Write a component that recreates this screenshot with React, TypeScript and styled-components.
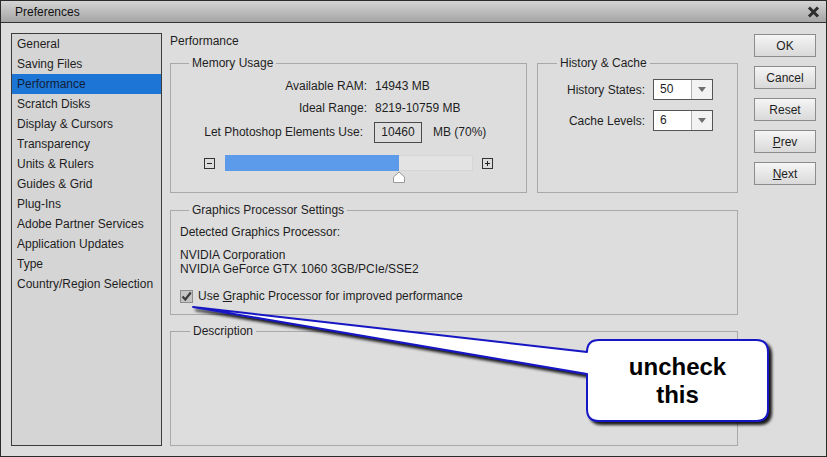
import React from 'react';
import styled, { createGlobalStyle } from 'styled-components';

const GlobalStyle = createGlobalStyle`
  html, body {
    margin: 0;
    padding: 0;
    background: #dcdcdc;
  }
  body {
    font-family: "Liberation Sans", Arial, sans-serif;
    font-size: 12px;
    color: #1e1e1e;
  }
`;

const Page = styled.div`
  position: relative;
  width: 827px;
  height: 457px;
`;

const Window = styled.div`
  width: 827px;
  height: 457px;
  box-sizing: border-box;
  border: 1px solid #2a2a2a;
  background: #dddddd;
  display: flex;
  flex-direction: column;
`;

const TitleBar = styled.div`
  height: 21px;
  flex: none;
  display: flex;
  align-items: center;
  justify-content: space-between;
  padding: 0 6px 0 14px;
  background: linear-gradient(#d4d4d4, #a5a5a5);
  border-bottom: 1px solid #333;
  color: #111;
  font-size: 12px;
`;

const Body = styled.div`
  flex: 1;
  display: flex;
  padding: 10px 10px 10px 10px;
  min-height: 0;
`;

const Sidebar = styled.ul`
  width: 151px;
  box-sizing: border-box;
  margin: 0;
  padding: 0;
  list-style: none;
  border: 1px solid #3b3b3b;
  background: #d5d5d5;
`;

const NavItem = styled.li<{ $active?: boolean }>`
  height: 20px;
  line-height: 20px;
  padding-left: 5px;
  white-space: nowrap;
  background: ${(p) => (p.$active ? '#1d76d6' : 'transparent')};
  color: ${(p) => (p.$active ? '#10203a' : '#1e1e1e')};
`;

const Content = styled.div`
  width: 568px;
  margin-left: 8px;
  display: flex;
  flex-direction: column;
`;

const Heading = styled.div`
  height: 16px;
  line-height: 16px;
`;

const TopRow = styled.div`
  margin-top: 7px;
  height: 137px;
  display: flex;
  gap: 10px;
`;

const Group = styled.fieldset<{ $width?: number; $height?: number; $gap?: number; $fill?: boolean }>`
  margin: ${(p) => p.$gap ?? 0}px 0 0 0;
  padding: 0;
  min-width: 0;
  box-sizing: border-box;
  border: 1px solid #a9a9a9;
  flex: ${(p) => (p.$fill ? '1' : 'none')};
  ${(p) => (p.$width ? `width: ${p.$width}px;` : '')}
  ${(p) => (p.$height ? `height: ${p.$height}px;` : '')}
`;

const Legend = styled.legend<{ $indent: number }>`
  margin-left: ${(p) => p.$indent}px;
  padding: 0 3px;
  line-height: 14px;
  font-size: 12px;
`;

const MemGrid = styled.div`
  display: grid;
  grid-template-columns: 167px auto;
  grid-template-rows: 18px 18px 22px;
  column-gap: 8px;
  row-gap: 4px;
  align-items: center;
  padding: 7px 0 0 29px;
`;

const Label = styled.div<{ $trim?: number }>`
  text-align: right;
  white-space: nowrap;
  margin-right: ${(p) => p.$trim ?? 0}px;
`;

const Value = styled.div`
  display: flex;
  align-items: center;
  white-space: nowrap;
`;

const NumberBox = styled.div`
  width: 48px;
  height: 21px;
  box-sizing: border-box;
  border: 1px solid #4a4a4a;
  text-align: center;
  line-height: 19px;
  margin-left: -1px;
`;

const Unit = styled.span`
  margin-left: 11px;
`;

const SliderRow = styled.div`
  margin-top: 12px;
  height: 16px;
  display: flex;
  align-items: center;
  padding-left: 33px;
`;

const StepBox = styled.div<{ $plus?: boolean }>`
  position: relative;
  width: 11px;
  height: 11px;
  box-sizing: border-box;
  border: 1px solid #333;
  &::before {
    content: '';
    position: absolute;
    left: 2px;
    top: 4px;
    width: 5px;
    height: 1px;
    background: #222;
  }
  &::after {
    content: '';
    display: ${(p) => (p.$plus ? 'block' : 'none')};
    position: absolute;
    left: 4px;
    top: 2px;
    width: 1px;
    height: 5px;
    background: #222;
  }
`;

const Track = styled.div`
  position: relative;
  width: 248px;
  height: 16px;
  margin: 0 9px 0 10px;
  background: #e3e3e3;
  box-shadow: inset 0 0 0 1px #d6d6d6;
`;

const Fill = styled.div`
  height: 100%;
  background: #5b9be9;
`;

const Thumb = styled.svg`
  position: absolute;
  top: 16px;
  margin-left: -7px;
`;

const HistGrid = styled.div`
  display: grid;
  grid-template-columns: 80px 60px;
  grid-auto-rows: 21px;
  column-gap: 8px;
  row-gap: 10px;
  align-items: center;
  padding: 9px 0 0 27px;
`;

const Select = styled.div`
  display: flex;
  height: 21px;
  box-sizing: border-box;
  border: 1px solid #555;
  background: #fff;
`;

const SelectValue = styled.div`
  flex: 1;
  padding-left: 6px;
  line-height: 19px;
`;

const SelectArrow = styled.div`
  width: 20px;
  border-left: 1px solid #b0b0b0;
  background: #f2f2f2;
  display: flex;
  align-items: center;
  justify-content: center;
  &::after {
    content: '';
    border-left: 4px solid transparent;
    border-right: 4px solid transparent;
    border-top: 5px solid #6f6f6f;
  }
`;

const GpuBody = styled.div`
  padding: 8px 0 10px 9px;
  line-height: 14px;
`;

const InfoBlock = styled.div`
  margin-top: 9px;
`;

const CheckRow = styled.label`
  margin-top: 12px;
  height: 16px;
  display: flex;
  align-items: center;
  gap: 5px;
`;

const CheckBox = styled.span`
  width: 13px;
  height: 13px;
  box-sizing: border-box;
  border: 1px solid #8d8d8d;
  background: #c4c4c4;
  display: flex;
  align-items: center;
  justify-content: center;
`;

const Buttons = styled.div`
  width: 62px;
  margin-left: 16px;
  padding-top: 1px;
  display: flex;
  flex-direction: column;
  gap: 9px;
`;

const Button = styled.button`
  height: 23px;
  padding: 0;
  border: 1px solid #8c8c8c;
  border-radius: 0;
  background: linear-gradient(#f5f5f5, #d9d9d9);
  font-family: inherit;
  font-size: 12px;
  color: #1e1e1e;
`;

const Annotation = styled.svg`
  position: absolute;
  left: 0;
  top: 0;
  pointer-events: none;
  overflow: visible;
`;

const CalloutText = styled.div`
  position: absolute;
  left: 587px;
  top: 340px;
  width: 181px;
  height: 81px;
  display: flex;
  flex-direction: column;
  align-items: center;
  justify-content: center;
  font-family: "Liberation Sans", Arial, sans-serif;
  font-weight: bold;
  font-size: 24px;
  line-height: 28px;
  color: #000;
  pointer-events: none;
`;

const sections = [
  'General',
  'Saving Files',
  'Performance',
  'Scratch Disks',
  'Display & Cursors',
  'Transparency',
  'Units & Rulers',
  'Guides & Grid',
  'Plug-Ins',
  'Adobe Partner Services',
  'Application Updates',
  'Type',
  'Country/Region Selection',
];

const memoryPercent = 70;

const App: React.FC = () => {
  return (
    <Page>
      <GlobalStyle />
      <Window>
        <TitleBar>
          <span>Preferences</span>
          <svg width="13" height="12" viewBox="0 0 13 12">
            <path d="M2 1.5 L11 10.5 M11 1.5 L2 10.5" stroke="#2e2e2e" strokeWidth="3" />
          </svg>
        </TitleBar>
        <Body>
          <Sidebar>
            {sections.map((s) => (
              <NavItem key={s} $active={s === 'Performance'}>
                {s}
              </NavItem>
            ))}
          </Sidebar>

          <Content>
            <Heading>Performance</Heading>
            <TopRow>
              <Group $width={357}>
                <Legend $indent={18}>Memory Usage</Legend>
                <MemGrid>
                  <Label>Available RAM:</Label>
                  <Value>14943 MB</Value>
                  <Label>Ideal Range:</Label>
                  <Value>8219-10759 MB</Value>
                  <Label $trim={4}>Let Photoshop Elements Use:</Label>
                  <Value>
                    <NumberBox>10460</NumberBox>
                    <Unit>MB (70%)</Unit>
                  </Value>
                </MemGrid>
                <SliderRow>
                  <StepBox />
                  <Track>
                    <Fill style={{ width: `${memoryPercent}%` }} />
                    <Thumb
                      width="14"
                      height="13"
                      viewBox="0 0 14 13"
                      style={{ left: `${memoryPercent}%` }}
                    >
                      <path
                        d="M7 1 L12.5 6 V11.5 H1.5 V6 Z"
                        fill="#fff"
                        stroke="#9a9a9a"
                        strokeWidth="1"
                      />
                    </Thumb>
                  </Track>
                  <StepBox $plus />
                </SliderRow>
              </Group>

              <Group $width={201}>
                <Legend $indent={19}>History &amp; Cache</Legend>
                <HistGrid>
                  <Label>History States:</Label>
                  <Select>
                    <SelectValue>50</SelectValue>
                    <SelectArrow />
                  </Select>
                  <Label>Cache Levels:</Label>
                  <Select>
                    <SelectValue>6</SelectValue>
                    <SelectArrow />
                  </Select>
                </HistGrid>
              </Group>
            </TopRow>

            <Group $height={112} $gap={10}>
              <Legend $indent={18}>Graphics Processor Settings</Legend>
              <GpuBody>
                <div>Detected Graphics Processor:</div>
                <InfoBlock>
                  <div>NVIDIA Corporation</div>
                  <div>NVIDIA GeForce GTX 1060 3GB/PCIe/SSE2</div>
                </InfoBlock>
                <CheckRow>
                  <CheckBox>
                    <svg width="11" height="11" viewBox="0 0 11 11">
                      <path
                        d="M1.5 5.5 L4.3 8.5 L9.8 1.5"
                        fill="none"
                        stroke="#3c3c3c"
                        strokeWidth="2.2"
                      />
                    </svg>
                  </CheckBox>
                  <span>
                    Use <u>G</u>raphic Processor for improved performance
                  </span>
                </CheckRow>
              </GpuBody>
            </Group>

            <Group $gap={9} $fill>
              <Legend $indent={19}>Description</Legend>
            </Group>
          </Content>

          <Buttons>
            <Button>OK</Button>
            <Button>Cancel</Button>
            <Button>Reset</Button>
            <Button>
              <u>P</u>rev
            </Button>
            <Button>
              <u>N</u>ext
            </Button>
          </Buttons>
        </Body>
      </Window>

      <Annotation width="827" height="457" viewBox="0 0 827 457">
        <defs>
          <filter id="shade" x="-10%" y="-10%" width="130%" height="140%">
            <feDropShadow dx="3" dy="3" stdDeviation="1.6" floodColor="#000" floodOpacity="0.9" />
          </filter>
        </defs>
        <path
          d="M599 340 H756 Q768 340 768 352 V409 Q768 421 756 421 H599 Q587 421 587 409 V374 L193 307 L587 352 Q587 340 599 340 Z"
          fill="#fff"
          stroke="#1717c4"
          strokeWidth="2"
          strokeLinejoin="round"
          filter="url(#shade)"
        />
      </Annotation>
      <CalloutText>
        <span>uncheck</span>
        <span>this</span>
      </CalloutText>
    </Page>
  );
};

export default App;
